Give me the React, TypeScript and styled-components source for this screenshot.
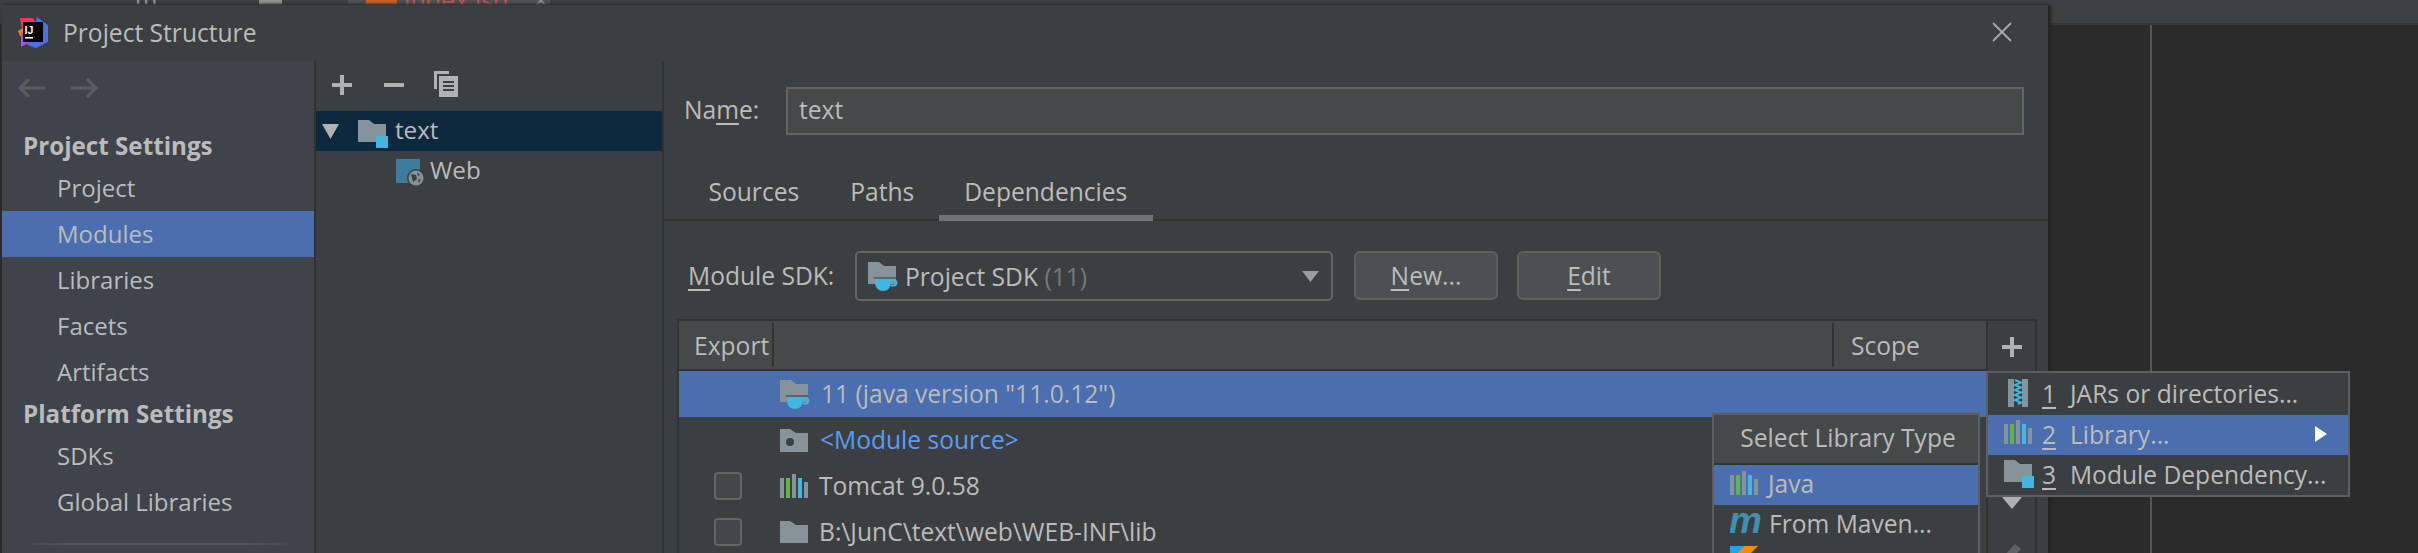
import React from "react";
import styled, { createGlobalStyle } from "styled-components";

const Global = createGlobalStyle`
  html, body { margin: 0; padding: 0; background: #2b2b2b; overflow: hidden; }
  * { box-sizing: border-box; }
`;

const Page = styled.div`
  position: relative;
  width: 2418px;
  height: 553px;
  overflow: hidden;
  background: #2b2b2b;
  font-family: "Open Sans", "Noto Sans", sans-serif;
  font-size: 24.6px;
  color: #bbbbbb;
`;

const IdeTop = styled.div`
  height: 25px;
  background: #3c4043;
  border-bottom: 2px solid #333536;
  display: flex;
  align-items: flex-start;
  overflow: hidden;
`;
const TopGlyph = styled.span<{ $w: number; $solid?: boolean }>`
  width: ${(p) => p.$w}px;
  height: 5px;
  overflow: hidden;
  display: block;
  color: #9a9da0;
  font-size: 24px;
  line-height: 0;
  background: ${(p) => (p.$solid ? "#8e9194" : "transparent")};
`;
const EditorTab = styled.div`
  margin-left: 66px;
  width: 202px;
  height: 6px;
  background: #4e5254;
  display: flex;
  padding-left: 18px;
  gap: 7px;
  overflow: hidden;
`;
const TabFile = styled.i`
  width: 31px;
  height: 5px;
  background: #c2602c;
  display: block;
  flex: none;
`;
const TabName = styled.span`
  color: #c75450;
  font-size: 25px;
  line-height: 0;
  display: block;
  width: 123px;
  flex: none;
`;
const TabClose = styled.span`
  color: #8f9295;
  font-size: 24px;
  line-height: 0;
  display: block;
`;
const Editor = styled.div`
  height: 528px;
  padding-left: 2150px;
`;
const GutterLine = styled.div`
  width: 2px;
  height: 100%;
  background: #555555;
`;

const Dialog = styled.div`
  position: absolute;
  left: 2px;
  top: 5px;
  width: 2046px;
  height: 548px;
  background: #3c3f41;
  box-shadow: 3px 0 3px #232323, 0 -1px 2px #303234;
  display: flex;
  flex-direction: column;
`;
const TitleBar = styled.div`
  height: 56px;
  flex: none;
  display: flex;
  align-items: center;
  padding: 0 36px 2px 14px;
  gap: 13px;
`;
const Title = styled.div`
  flex: 1;
  font-size: 24.6px;
  line-height: 30px;
  padding-top: 2px;
`;
const Body = styled.div`
  flex: 1;
  display: flex;
  min-height: 0;
`;
const Sidebar = styled.div`
  width: 312px;
  flex: none;
  background: #3e434c;
  display: flex;
  flex-direction: column;
  position: relative;
  font-size: 24px;
`;
const NavArrows = styled.div`
  height: 68px;
  padding: 17px 0 0 16px;
  display: flex;
  gap: 26px;
  align-items: flex-start;
  flex: none;
`;
const SectionHead = styled.div<{ $h: number; $lift: number }>`
  height: ${(p) => p.$h}px;
  line-height: ${(p) => p.$h - p.$lift}px;
  padding-left: 21px;
  font-weight: 700;
  font-size: 24.2px;
  flex: none;
`;
const NavItem = styled.div<{ $active?: boolean }>`
  height: 46px;
  line-height: 46px;
  padding-left: 55px;
  flex: none;
  background: ${(p) => (p.$active ? "#4b6eaf" : "transparent")};
`;
const SideRule = styled.div`
  position: absolute;
  left: 16px;
  right: 14px;
  top: 482px;
  height: 2px;
  background: linear-gradient(90deg, #3e434c, #55585c 20%, #55585c 80%, #3e434c);
`;
const Divider = styled.div`
  width: 2px;
  flex: none;
  background: #323232;
`;
const TreePanel = styled.div`
  width: 346px;
  flex: none;
  display: flex;
  flex-direction: column;
  font-size: 24.2px;
`;
const TreeTools = styled.div`
  height: 50px;
  flex: none;
  display: flex;
  align-items: flex-start;
  padding: 14px 0 0 16px;
  gap: 32px;
`;
const TreeRow = styled.div<{ $selected?: boolean; $indent: number }>`
  height: 40px;
  flex: none;
  display: flex;
  align-items: center;
  padding-left: ${(p) => p.$indent}px;
  background: ${(p) => (p.$selected ? "#0d293e" : "transparent")};
`;
const TreeSpacer = styled.span`
  width: 19px;
  flex: none;
`;
const TreeLabel = styled.span<{ $gap: number }>`
  margin-left: ${(p) => p.$gap}px;
  line-height: 38px;
  height: 40px;
`;
const Detail = styled.div`
  flex: 1;
  min-width: 0;
  display: flex;
  flex-direction: column;
`;
const NameRow = styled.div`
  height: 104px;
  flex: none;
  display: flex;
  align-items: flex-start;
  padding: 26px 24px 0 20px;
`;
const NameLabel = styled.div`
  width: 102px;
  line-height: 46px;
`;
const NameInput = styled.div`
  flex: 1;
  height: 48px;
  background: #45494a;
  border: 2px solid #646464;
  padding-left: 11px;
  line-height: 42px;
`;
const Under = styled.u`
  text-decoration: underline;
  text-decoration-thickness: 2px;
  text-underline-offset: 4px;
`;
const Tabs = styled.div`
  height: 56px;
  flex: none;
  display: flex;
  padding-left: 19px;
  border-bottom: 2px solid #323232;
`;
const Tab = styled.div<{ $active?: boolean }>`
  height: 56px;
  line-height: 54px;
  padding: 0 ${(p) => (p.$active ? "0" : "25.5px")};
  margin-left: ${(p) => (p.$active ? "-1px" : "0")};
  border-bottom: 6px solid ${(p) => (p.$active ? "#6f7377" : "transparent")};
  white-space: nowrap;
  flex: none;
  width: ${(p) => (p.$active ? "214px" : "auto")};
  text-align: center;
`;
const DepPanel = styled.div`
  flex: 1;
  min-height: 0;
  padding: 30px 11px 0 13px;
  display: flex;
  flex-direction: column;
  overflow: hidden;
`;
const SdkRow = styled.div`
  height: 50px;
  flex: none;
  display: flex;
  align-items: flex-start;
  padding-left: 11px;
`;
const SdkLabel = styled.div`
  width: 167px;
  line-height: 50px;
  white-space: nowrap;
`;
const Combo = styled.div`
  width: 478px;
  height: 50px;
  border: 2px solid #646464;
  border-radius: 5px;
  display: flex;
  align-items: center;
  padding: 0 12px 0 11px;
  gap: 6px;
`;
const ComboText = styled.span`
  flex: 1;
  white-space: nowrap;
`;
const Dim = styled.span`
  color: #787878;
`;
const Btn = styled.div<{ $gap: number }>`
  width: 144px;
  height: 49px;
  margin-left: ${(p) => p.$gap}px;
  background: #4c5052;
  border: 2px solid #5e6060;
  border-radius: 6px;
  text-align: center;
  line-height: 46px;
`;
const Table = styled.div`
  margin-top: 18px;
  flex: 1;
  min-height: 0;
  border: 2px solid #323232;
  border-bottom: 0;
  display: flex;
`;
const TableMain = styled.div`
  width: 1307px;
  flex: none;
  display: flex;
  flex-direction: column;
`;
const Header = styled.div`
  height: 50px;
  flex: none;
  background: #45494a;
  border-bottom: 2px solid #323232;
  display: flex;
`;
const HeadCell = styled.div<{ $w?: number }>`
  ${(p) => (p.$w ? `width: ${p.$w}px; flex: none;` : "flex: 1;")}
  line-height: 46px;
  height: 44px;
  margin-top: 2px;
  border-right: 2px solid #323232;
  &:last-child { border-right: 0; }
`;
const HeadText = styled.span<{ $pad: number }>`
  padding-left: ${(p) => p.$pad}px;
`;
const Row = styled.div<{ $selected?: boolean }>`
  height: 46px;
  flex: none;
  display: flex;
  align-items: center;
  background: ${(p) => (p.$selected ? "#4b6eaf" : "transparent")};
`;
const CheckCell = styled.div`
  width: 101px;
  flex: none;
  padding-left: 35px;
`;
const Check = styled.div`
  width: 28px;
  height: 28px;
  border: 2px solid #646464;
  border-radius: 4px;
  background: #43474a;
`;
const RowText = styled.span<{ $link?: boolean; $gap?: number }>`
  margin-left: ${(p) => p.$gap ?? 11}px;
  white-space: nowrap;
  color: ${(p) => (p.$link ? "#589df6" : "#bbbbbb")};
  padding-bottom: 2px;
`;
const SideTools = styled.div`
  flex: 1;
  border-left: 2px solid #323232;
  display: flex;
  flex-direction: column;
  align-items: center;
`;
const ToolSlot = styled.div`
  height: 52px;
  flex: none;
  display: flex;
  align-items: center;
  justify-content: center;
`;

const Popup = styled.div<{ $x: number; $y: number; $w: number }>`
  position: absolute;
  left: ${(p) => p.$x}px;
  top: ${(p) => p.$y}px;
  width: ${(p) => p.$w}px;
  background: #3c3f41;
  border: 2px solid #5c5e60;
`;
const PopupTitle = styled.div`
  height: 50px;
  background: #45494a;
  border-bottom: 2px solid #323232;
  text-align: center;
  line-height: 46px;
  padding-left: 4px;
`;
const PopItem = styled.div<{ $active?: boolean; $h?: number; $pad: number }>`
  height: ${(p) => p.$h ?? 40}px;
  display: flex;
  align-items: center;
  padding: 0 0 2px ${(p) => p.$pad}px;
  white-space: nowrap;
  background: ${(p) => (p.$active ? "#4b6eaf" : "transparent")};
`;
const PopIcon = styled.span<{ $w: number; $up?: number }>`
  width: ${(p) => p.$w}px;
  margin-top: ${(p) => -(p.$up ?? 0)}px;
  flex: none;
  display: flex;
`;
const Num = styled.span`
  width: 28px;
  flex: none;
`;
const PopLabel = styled.span`
  flex: 1;
`;
const Chevron = styled.svg`
  width: 12px;
  height: 16px;
  margin-right: 21px;
  flex: none;
`;

const GRAY = "#87939a";
const BLUE = "#40b6e0";

const IJLogo = () => (
  <svg width="34" height="32" viewBox="0 0 32 32" style={{ flex: "none" }}>
    <path d="M3 2 L16 2 L20 10 L8 20 L5 14 Z" fill="#fe315d" />
    <path d="M1 15 L6 12 L8 19 L3 20 Z" fill="#f97a12" />
    <path d="M4 16 L13 26 L4 31 Z" fill="#b74af7" />
    <path d="M20 1 L31 9 L31 26 L19 32 L10 29 L18 8 Z" fill="#4a6fe8" />
    <rect x="6" y="6" width="20" height="20" fill="#000" />
    <text x="7.500" y="17.500" fontFamily="Liberation Sans, sans-serif" fontWeight="700" fontSize="10.500" fill="#fff">IJ</text>
    <rect x="8" y="21" width="8" height="1.600" fill="#fff" />
  </svg>
);
const Arrow = ({ flip }: { flip?: boolean }) => (
  <svg width="27" height="20" viewBox="0 0 27 20" style={flip ? { transform: "scaleX(-1)" } : undefined}>
    <path d="M11 1 L2 10 L11 19 M2 10 H27" fill="none" stroke="#5a5d5f" strokeWidth="3.200" />
  </svg>
);
const Plus = () => (
  <svg width="20" height="20" viewBox="0 0 20 20" style={{ flex: "none" }}>
    <path d="M8 0h4v8h8v4h-8v8H8v-8H0V8h8z" fill="#afb1b3" />
  </svg>
);
const Minus = () => (
  <svg width="20" height="20" viewBox="0 0 20 20" style={{ flex: "none" }}>
    <rect x="0" y="8" width="20" height="4" fill="#afb1b3" />
  </svg>
);
const CopyIcon = () => (
  <svg width="24" height="26" viewBox="0 0 24 26" style={{ flex: "none", margin: "-4px 0 0 -2px" }}>
    <path d="M0 0h15v3H3v15H0z" fill="#afb1b3" />
    <path d="M5 5h19v21H5z" fill="#afb1b3" />
    <path d="M9 10h11v2H9zM9 14h11v2H9zM9 18h11v2H9z" fill="#3c3f41" />
  </svg>
);
const TreeArrow = () => (
  <svg width="17" height="15" viewBox="0 0 17 15" style={{ flex: "none" }}>
    <path d="M0 0h17L8.500 15z" fill="#afb1b3" />
  </svg>
);
const ModuleFolder = () => (
  <svg width="30" height="28" viewBox="0 0 30 28" style={{ flex: "none", marginTop: 6 }}>
    <path d="M0 0h11l5 4h12v18H18v-6H0z M0 16h18v6H0z" fill={GRAY} />
    <rect x="18" y="16" width="12" height="12" fill={BLUE} />
  </svg>
);
const WebIcon = () => (
  <svg width="28" height="28" viewBox="0 0 28 28" style={{ flex: "none", marginTop: 4 }}>
    <rect width="24" height="24" fill="#3d7c9a" />
    <circle cx="20" cy="19" r="9" fill="#3c3f41" />
    <circle cx="20" cy="19" r="7.500" fill="#87939a" />
    <path d="M15 15l5 1 1 4-4 3-1-4zM21 13l3 3-2 1zM22 21l3-1-2 4z" fill="#3c3f41" />
  </svg>
);
const JdkFolder = () => (
  <svg width="31" height="29" viewBox="0 0 31 29" style={{ flex: "none" }}>
    <path d="M0 0h11l5 4h12v18H0z" fill={GRAY} />
    <rect x="6" y="15" width="22" height="2" fill="#3c3f41" opacity=".55" />
    <path d="M7 17h16v4a8 8 0 0 1-8 8 8 8 0 0 1-8-8z" fill={BLUE} />
    <path d="M23 18.500h3a2.500 2.500 0 0 1 0 5h-3" fill="none" stroke={BLUE} strokeWidth="2" />
  </svg>
);
const SourceFolder = () => (
  <svg width="28" height="23" viewBox="0 0 28 23" style={{ flex: "none" }}>
    <path d="M0 0h10l6 4h12v19H0z" fill={GRAY} />
    <circle cx="10" cy="13" r="4" fill="#3c3f41" />
  </svg>
);
const PlainFolder = () => (
  <svg width="28" height="22" viewBox="0 0 28 22" style={{ flex: "none" }}>
    <path d="M0 0h10l6 4h12v18H0z" fill={GRAY} />
  </svg>
);
const LibraryIcon = () => (
  <svg width="28" height="24" viewBox="0 0 28 24" style={{ flex: "none" }}>
    <rect x="0" y="4" width="4" height="20" fill={GRAY} />
    <rect x="6" y="4" width="4" height="20" fill="#62b543" />
    <rect x="12" y="0" width="4" height="24" fill={GRAY} />
    <rect x="18" y="4" width="4" height="20" fill={BLUE} />
    <rect x="24" y="8" width="4" height="16" fill={GRAY} />
  </svg>
);
const JarIcon = () => (
  <svg width="20" height="28" viewBox="0 0 20 28">
    <rect width="20" height="28" fill={GRAY} />
    <rect x="6" y="0" width="8" height="28" fill="#3c3f41" />
    <path d="M7 1l6 2.500-6 2.500 6 2.500-6 2.500 6 2.500-6 2.500 6 2.500-6 2.500 6 2.500-3 1.500" fill="none" stroke={BLUE} strokeWidth="2" />
  </svg>
);
const MavenIcon = () => (
  <svg width="32" height="24" viewBox="0 0 32 24" style={{ flex: "none" }}>
    <text x="-1" y="21" fontFamily="Liberation Sans, sans-serif" fontWeight="700" fontStyle="italic" fontSize="37" fill="#3e8fb0">m</text>
  </svg>
);
const KotlinIcon = () => (
  <svg width="28" height="28" viewBox="0 0 28 28" style={{ flex: "none", marginTop: -8 }}>
    <path d="M0 0h14L0 14z" fill="#1aa7ee" />
    <path d="M14 0h14L0 28V14z" fill="#f88909" />
  </svg>
);
const CloseX = () => (
  <svg width="20" height="20" viewBox="0 0 20 20" style={{ flex: "none" }}>
    <path d="M1 1l18 18M19 1L1 19" stroke="#a7a9ab" strokeWidth="1.800" fill="none" />
  </svg>
);
const ComboArrow = () => (
  <svg width="17" height="11" viewBox="0 0 17 11" style={{ flex: "none" }}>
    <path d="M0 0h17L8.500 11z" fill="#9a9c9e" />
  </svg>
);
const DownArrow = () => (
  <svg width="20" height="12" viewBox="0 0 20 12">
    <path d="M0 0h20L10 12z" fill="#afb1b3" />
  </svg>
);
const Pencil = () => (
  <svg width="20" height="22" viewBox="0 0 20 22">
    <path d="M13 0l6 5L7 18 1 13z" fill="#5f6265" />
  </svg>
);

export default function App() {
  return (
    <Page>
      <Global />
      <IdeTop>
        <TopGlyph $w={136} />
        <TopGlyph $w={30}>(i)</TopGlyph>
        <TopGlyph $w={93} />
        <TopGlyph $w={23} $solid />
        <EditorTab>
          <TabFile />
          <TabName>index.jsp</TabName>
          <TabClose>×</TabClose>
        </EditorTab>
      </IdeTop>
      <Editor>
        <GutterLine />
      </Editor>
      <Dialog>
        <TitleBar>
          <IJLogo />
          <Title>Project Structure</Title>
          <CloseX />
        </TitleBar>
        <Body>
          <Sidebar>
            <NavArrows>
              <Arrow />
              <Arrow flip />
            </NavArrows>
            <SectionHead $h={36} $lift={3}>Project Settings</SectionHead>
            <NavItem>Project</NavItem>
            <NavItem $active>Modules</NavItem>
            <NavItem>Libraries</NavItem>
            <NavItem>Facets</NavItem>
            <NavItem>Artifacts</NavItem>
            <SectionHead $h={38} $lift={0}>Platform Settings</SectionHead>
            <NavItem>SDKs</NavItem>
            <NavItem>Global Libraries</NavItem>
            <SideRule />
          </Sidebar>
          <Divider />
          <TreePanel>
            <TreeTools>
              <Plus />
              <Minus />
              <CopyIcon />
            </TreeTools>
            <TreeRow $selected $indent={6}>
              <TreeArrow />
              <TreeSpacer />
              <ModuleFolder />
              <TreeLabel $gap={7}>text</TreeLabel>
            </TreeRow>
            <TreeRow $indent={80}>
              <WebIcon />
              <TreeLabel $gap={6}>Web</TreeLabel>
            </TreeRow>
          </TreePanel>
          <Divider />
          <Detail>
            <NameRow>
              <NameLabel>
                Na<Under>m</Under>e:
              </NameLabel>
              <NameInput>text</NameInput>
            </NameRow>
            <Tabs>
              <Tab>Sources</Tab>
              <Tab>Paths</Tab>
              <Tab $active>Dependencies</Tab>
            </Tabs>
            <DepPanel>
              <SdkRow>
                <SdkLabel>
                  <Under>M</Under>odule SDK:
                </SdkLabel>
                <Combo>
                  <JdkFolder />
                  <ComboText>
                    Project SDK <Dim>(11)</Dim>
                  </ComboText>
                  <ComboArrow />
                </Combo>
                <Btn $gap={21}>
                  <Under>N</Under>ew...
                </Btn>
                <Btn $gap={19}>
                  <Under>E</Under>dit
                </Btn>
              </SdkRow>
              <Table>
                <TableMain>
                  <Header>
                    <HeadCell $w={95}>
                      <HeadText $pad={15}>Export</HeadText>
                    </HeadCell>
                    <HeadCell />
                    <HeadCell $w={152}>
                      <HeadText $pad={17}>Scope</HeadText>
                    </HeadCell>
                  </Header>
                  <Row $selected>
                    <CheckCell />
                    <JdkFolder />
                    <RowText $gap={10}>11 (java version "11.0.12")</RowText>
                  </Row>
                  <Row>
                    <CheckCell />
                    <SourceFolder />
                    <RowText $link $gap={12}>&lt;Module source&gt;</RowText>
                  </Row>
                  <Row>
                    <CheckCell>
                      <Check />
                    </CheckCell>
                    <LibraryIcon />
                    <RowText>Tomcat 9.0.58</RowText>
                  </Row>
                  <Row>
                    <CheckCell>
                      <Check />
                    </CheckCell>
                    <PlainFolder />
                    <RowText>B:\JunC\text\web\WEB-INF\lib</RowText>
                  </Row>
                </TableMain>
                <SideTools>
                  <ToolSlot>
                    <Plus />
                  </ToolSlot>
                  <ToolSlot>
                    <Minus />
                  </ToolSlot>
                  <ToolSlot />
                  <ToolSlot>
                    <DownArrow />
                  </ToolSlot>
                  <ToolSlot>
                    <Pencil />
                  </ToolSlot>
                </SideTools>
              </Table>
            </DepPanel>
          </Detail>
        </Body>
        <Popup $x={1710} $y={408} $w={268}>
          <PopupTitle>Select Library Type</PopupTitle>
          <PopItem $active $pad={16}>
            <PopIcon $w={28} $up={3}>
              <LibraryIcon />
            </PopIcon>
            <RowText $gap={10}>Java</RowText>
          </PopItem>
          <PopItem $pad={16}>
            <MavenIcon />
            <RowText $gap={7}>From Maven...</RowText>
          </PopItem>
          <PopItem $pad={16}>
            <KotlinIcon />
          </PopItem>
        </Popup>
        <Popup $x={1984} $y={366} $w={364}>
          <PopItem $h={42} $pad={20}>
            <PopIcon $w={34}>
              <JarIcon />
            </PopIcon>
            <Num>
              <Under>1</Under>
            </Num>
            <PopLabel>JARs or directories...</PopLabel>
          </PopItem>
          <PopItem $active $pad={16}>
            <PopIcon $w={38} $up={4}>
              <LibraryIcon />
            </PopIcon>
            <Num>
              <Under>2</Under>
            </Num>
            <PopLabel>Library...</PopLabel>
            <Chevron viewBox="0 0 12 16">
              <path d="M0 0l12 8-12 8z" fill="#ffffff" />
            </Chevron>
          </PopItem>
          <PopItem $h={40} $pad={16}>
            <PopIcon $w={38} $up={6}>
              <ModuleFolder />
            </PopIcon>
            <Num>
              <Under>3</Under>
            </Num>
            <PopLabel>Module Dependency...</PopLabel>
          </PopItem>
        </Popup>
      </Dialog>
    </Page>
  );
}
